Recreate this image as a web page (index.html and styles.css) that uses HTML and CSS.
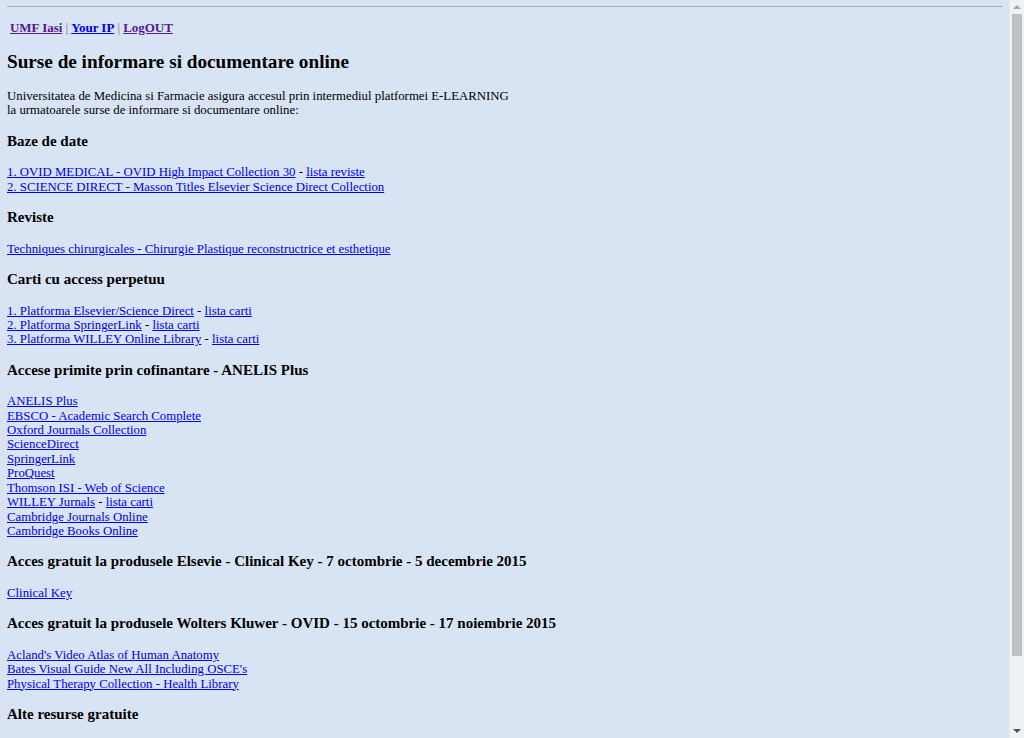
FILE: index.html
```html
<!DOCTYPE html>
<html lang="ro">
<head>
<meta charset="utf-8">
<title>Surse de informare si documentare online</title>
<link rel="stylesheet" href="styles.css">
</head>
<body>
<hr class="rule">
<div class="topnav">
  <a class="visited" href="#">UMF Iasi</a><span class="sep"> | </span><a href="#">Your IP</a><span class="sep"> | </span><a class="visited" href="#">LogOUT</a>
</div>

<h1 class="page-title">Surse de informare si documentare online</h1>
<p class="intro">Universitatea de Medicina si Farmacie asigura accesul prin intermediul platformei E-LEARNING<br>la urmatoarele surse de informare si documentare online:</p>

<h3 class="section">Baze de date</h3>
<p class="links">
  <a href="#">1. OVID MEDICAL - OVID High Impact Collection 30</a> - <a href="#">lista reviste</a><br>
  <a href="#">2. SCIENCE DIRECT - Masson Titles Elsevier Science Direct Collection</a>
</p>

<h3 class="section">Reviste</h3>
<p class="links">
  <a href="#">Techniques chirurgicales - Chirurgie Plastique reconstructrice et esthetique</a>
</p>

<h3 class="section">Carti cu access perpetuu</h3>
<p class="links">
  <a href="#">1. Platforma Elsevier/Science Direct</a> - <a href="#">lista carti</a><br>
  <a href="#">2. Platforma SpringerLink</a> - <a href="#">lista carti</a><br>
  <a href="#">3. Platforma WILLEY Online Library</a> - <a href="#">lista carti</a>
</p>

<h3 class="section">Accese primite prin cofinantare - ANELIS Plus</h3>
<p class="links">
  <a href="#">ANELIS Plus</a><br>
  <a href="#">EBSCO - Academic Search Complete</a><br>
  <a href="#">Oxford Journals Collection</a><br>
  <a href="#">ScienceDirect</a><br>
  <a href="#">SpringerLink</a><br>
  <a href="#">ProQuest</a><br>
  <a href="#">Thomson ISI - Web of Science</a><br>
  <a href="#">WILLEY Jurnals</a> - <a href="#">lista carti</a><br>
  <a href="#">Cambridge Journals Online</a><br>
  <a href="#">Cambridge Books Online</a>
</p>

<h3 class="section">Acces gratuit la produsele Elsevie - Clinical Key - 7 octombrie - 5 decembrie 2015</h3>
<p class="links">
  <a href="#">Clinical Key</a>
</p>

<h3 class="section">Acces gratuit la produsele Wolters Kluwer - OVID - 15 octombrie - 17 noiembrie 2015</h3>
<p class="links">
  <a href="#">Acland's Video Atlas of Human Anatomy</a><br>
  <a href="#">Bates Visual Guide New All Including OSCE's</a><br>
  <a href="#">Physical Therapy Collection - Health Library</a>
</p>

<h3 class="section">Alte resurse gratuite</h3>
<p class="links links-last">
  <a href="#">PubMed</a><br>
  <a href="#">DOAJ - Directory of Open Access Journals</a><br>
  <a href="#">Free Medical Journals</a><br>
  <a href="#">Medscape</a>
</p>

<!-- window scrollbar, drawn over the right edge of the page -->
<div class="scrollbar" aria-hidden="true">
  <span class="scroll-arrow up"></span>
  <span class="scroll-thumb"></span>
  <span class="scroll-arrow down"></span>
</div>
</body>
</html>
```

FILE: styles.css
```css
html {
  background: #d8e3f3;
}

body {
  margin: 0 22px 8px 7px;
  font-family: "Liberation Serif", "Times New Roman", serif;
  font-size: 12.8px;
  line-height: 14.4px;
  color: #000;
  background: #d8e3f3;
}

a {
  color: #0000ee;
}

a.visited {
  color: #551a8b;
}

.rule {
  margin: 6px -7px 0 0;
  height: 0;
  border: 0;
  border-top: 1px solid #a8a8a8;
}

.topnav {
  margin-top: 13px;
  padding-left: 3px;
  font-size: 13px;
  line-height: 15px;
  font-weight: bold;
  letter-spacing: -0.05px;
}

.topnav .sep {
  color: #7a7a7a;
  font-weight: normal;
}

.page-title {
  margin: 16px 0 0;
  font-size: 19.2px;
  line-height: 22px;
  font-weight: bold;
}

.intro {
  margin: 16px 0 0;
}

.section {
  margin: 15px 0;
  font-size: 15px;
  line-height: 17.5px;
  font-weight: bold;
}

.links {
  margin: 12.8px 0;
}

.links-last {
  margin-top: 18px;
}

/* scrollbar */
.scrollbar {
  position: fixed;
  top: 0;
  right: 0;
  bottom: 0;
  width: 14px;
  background: #f1f1f1;
  border-left: 1px solid #e8e8e8;
  display: flex;
  flex-direction: column;
  align-items: center;
}

.scroll-arrow {
  flex: 0 0 14px;
  width: 14px;
  display: flex;
  align-items: center;
  justify-content: center;
}

.scroll-arrow::before {
  content: "";
  width: 0;
  height: 0;
  border-left: 4px solid transparent;
  border-right: 4px solid transparent;
}

.scroll-arrow.up::before {
  border-bottom: 4px solid #a3a3a3;
}

.scroll-arrow.down::before {
  border-top: 4px solid #505050;
}

.scroll-thumb {
  width: 10px;
  height: 642px;
  background: #c1c1c1;
  margin-bottom: auto;
}
```
